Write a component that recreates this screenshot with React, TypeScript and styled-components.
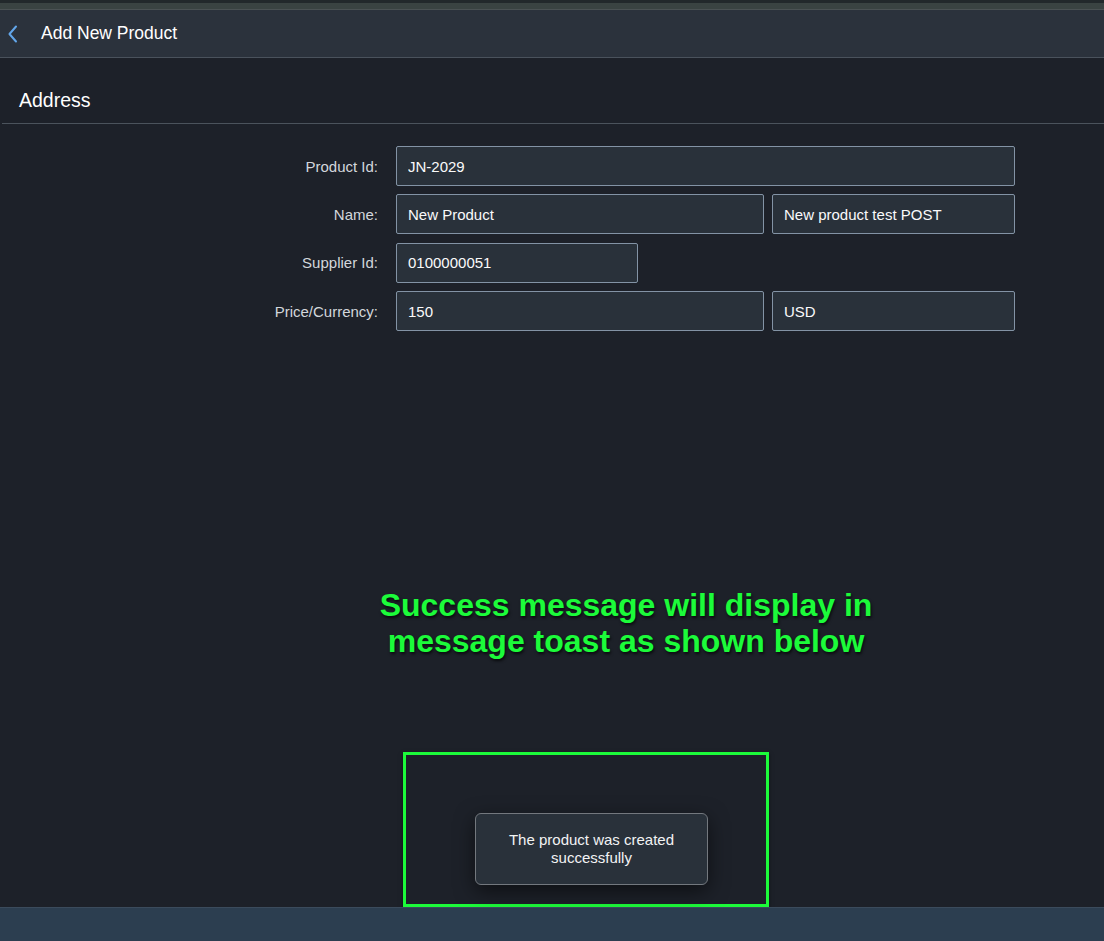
import * as React from 'react';
import styled, { createGlobalStyle } from 'styled-components';

const GlobalStyle = createGlobalStyle`
	html, body {
		margin: 0;
		padding: 0;
		background: #1d2129;
	}
	* {
		box-sizing: border-box;
	}
`;

const Page = styled.div`
	display: flex;
	flex-direction: column;
	height: 100vh;
	background: #1d2129;
	font-family: 'Liberation Sans', Arial, sans-serif;
	color: #f5f6f7;
`;

const TopStrip = styled.div`
	height: 10px;
	background: #3a4342;
	border-top: 3px solid #22282b;
	border-bottom: 1px solid #4b5254;
`;

const Header = styled.header`
	display: flex;
	align-items: center;
	height: 48px;
	background: #2b323c;
	border-bottom: 1px solid #4a525c;
`;

const BackButton = styled.button`
	display: flex;
	align-items: center;
	justify-content: center;
	width: 26px;
	height: 40px;
	padding: 0;
	background: none;
	border: none;
	cursor: pointer;
`;

const Title = styled.h1`
	margin: 0 0 0 15px;
	font-size: 17.5px;
	font-weight: 400;
	color: #ffffff;
`;

const Content = styled.main`
	flex: 1;
	display: flex;
	flex-direction: column;
`;

const SectionTitle = styled.h2`
	display: flex;
	align-items: flex-end;
	height: 66px;
	margin: 0 0 0 2px;
	padding: 0 0 11px 17px;
	font-size: 19.5px;
	font-weight: 400;
	color: #ffffff;
	border-bottom: 1px solid #4b535c;
`;

const Form = styled.form`
	display: flex;
	flex-direction: column;
	gap: 8.4px;
	margin-top: 22px;
`;

const Row = styled.div`
	display: flex;
	align-items: center;
	height: 40px;
`;

const Label = styled.label`
	width: 378px;
	text-align: right;
	font-size: 15px;
	color: #d3d7dc;
`;

const Fields = styled.div`
	display: flex;
	gap: 8px;
	margin-left: 18px;
`;

const Input = styled.input<{ $width: number }>`
	width: ${(p) => p.$width}px;
	height: 40px;
	padding: 0 11px;
	background: #29313a;
	border: 1px solid #8393a5;
	border-radius: 2px;
	font-family: inherit;
	font-size: 15px;
	color: #fafafa;
	outline: none;
`;

const Annotation = styled.p`
	width: 600px;
	margin: auto 0 93px 326px;
	text-align: center;
	font-size: 32px;
	font-weight: 700;
	line-height: 36px;
	color: #1cfb3a;
	text-shadow: 1px 2px 3px rgba(0, 0, 0, 0.7);
`;

const Highlight = styled.div`
	display: flex;
	align-items: center;
	justify-content: center;
	width: 366px;
	height: 155px;
	margin-left: 403px;
	padding: 38px 0 0 11px;
	border: 3px solid #1cfb3a;
	box-shadow: 0 2px 4px rgba(0, 0, 0, 0.5);
`;

const Toast = styled.div`
	display: flex;
	align-items: center;
	justify-content: center;
	width: 233px;
	height: 72px;
	padding: 0 20px;
	background: #29313a;
	border: 1px solid #73787e;
	border-radius: 6px;
	box-shadow: 0 6px 20px rgba(0, 0, 0, 0.55);
	text-align: center;
	font-size: 15px;
	line-height: 18px;
	color: #f2f3f4;
`;

const Footer = styled.footer`
	height: 34px;
	background: #2c3e50;
	border-top: 1px solid #3b4b5c;
`;

interface FieldDef {
	value: string;
	width: number;
}

interface RowDef {
	label: string;
	fields: FieldDef[];
}

const rows: RowDef[] = [
	{ label: 'Product Id:', fields: [ { value: 'JN-2029', width: 619 } ] },
	{
		label: 'Name:',
		fields: [ { value: 'New Product', width: 368 }, { value: 'New product test POST', width: 243 } ]
	},
	{ label: 'Supplier Id:', fields: [ { value: '0100000051', width: 242 } ] },
	{
		label: 'Price/Currency:',
		fields: [ { value: '150', width: 368 }, { value: 'USD', width: 243 } ]
	}
];

const App: React.FunctionComponent = () => {
	return (
		<Page>
			<GlobalStyle />
			<TopStrip />
			<Header>
				<BackButton aria-label="Back">
					<svg width="12" height="18" viewBox="0 0 12 18">
						<polyline
							points="9,1.5 2.5,9 9,16.5"
							fill="none"
							stroke="#62a6ea"
							strokeWidth="2"
							strokeLinecap="round"
							strokeLinejoin="round"
						/>
					</svg>
				</BackButton>
				<Title>Add New Product</Title>
			</Header>
			<Content>
				<SectionTitle>Address</SectionTitle>
				<Form>
					{rows.map((row) => (
						<Row key={row.label}>
							<Label>{row.label}</Label>
							<Fields>
								{row.fields.map((f) => (
									<Input key={f.value} $width={f.width} defaultValue={f.value} />
								))}
							</Fields>
						</Row>
					))}
				</Form>
				<Annotation>
					Success message will display in
					<br />
					message toast as shown below
				</Annotation>
				<Highlight>
					<Toast>The product was created successfully</Toast>
				</Highlight>
			</Content>
			<Footer />
		</Page>
	);
};

export default App;
